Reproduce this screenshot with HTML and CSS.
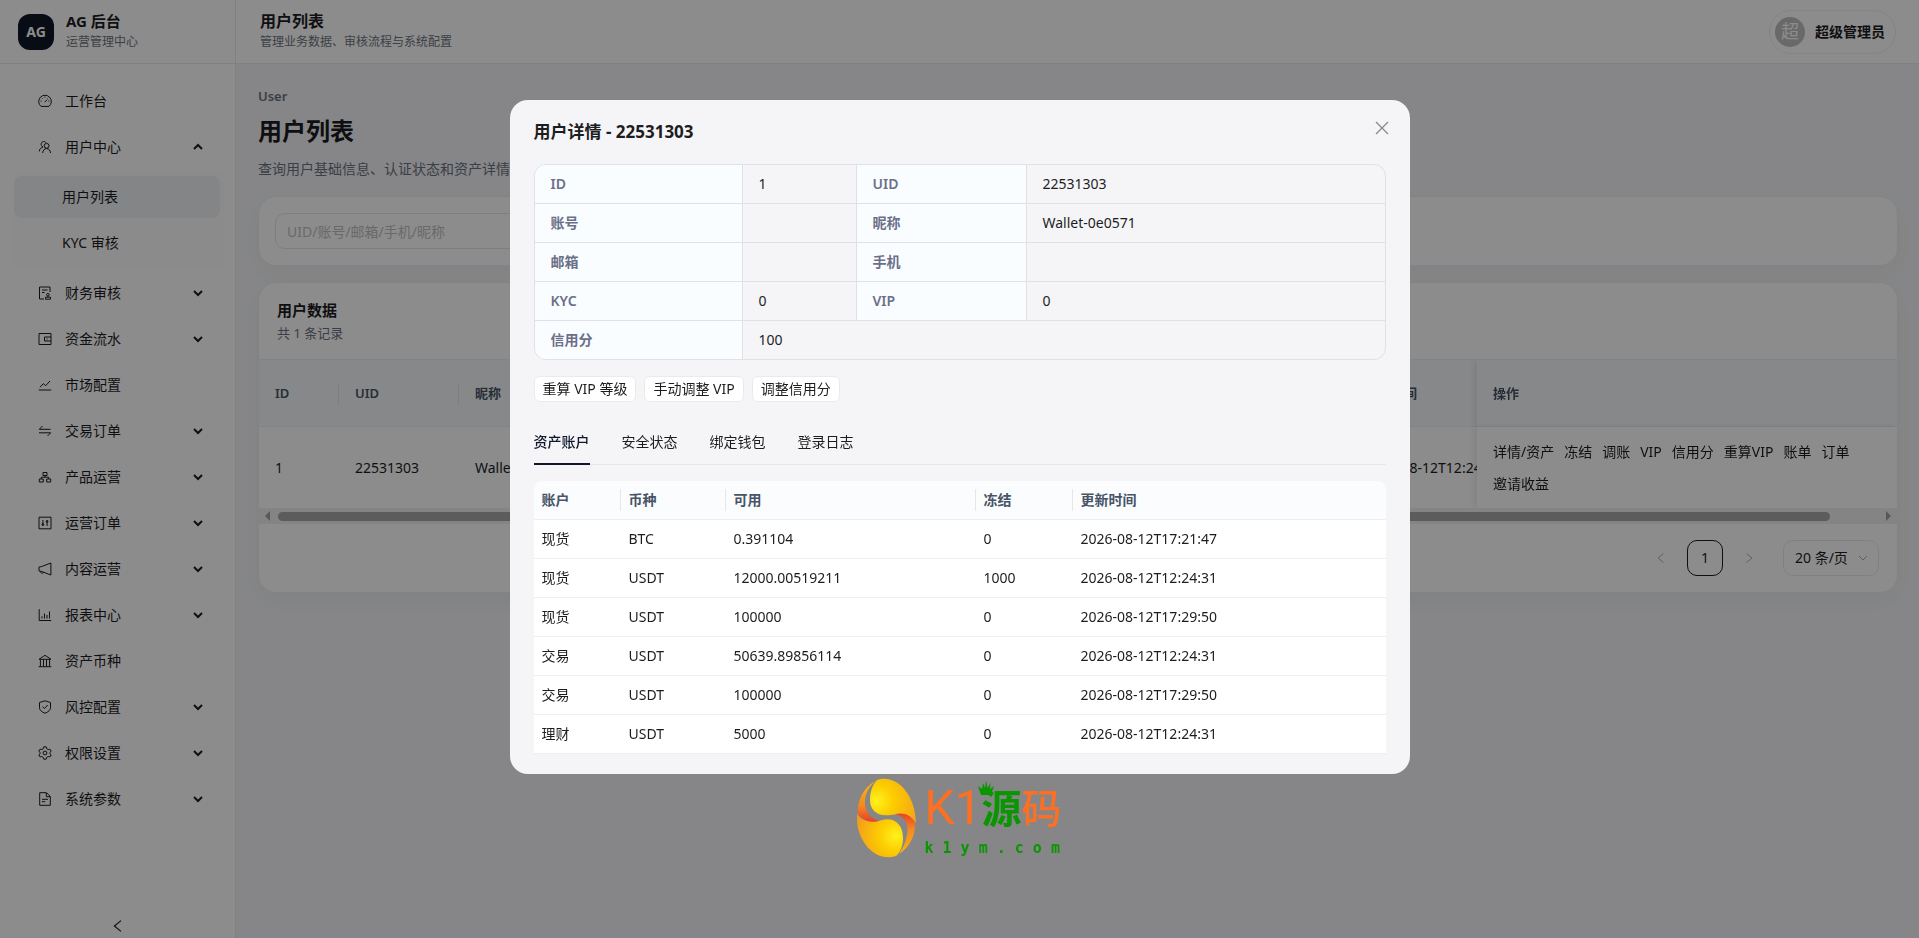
FILE: index.html
```html
<!DOCTYPE html>
<html lang="zh-CN">
<head>
    <meta charset="UTF-8">
    <meta name="viewport" content="width=device-width, initial-scale=1.0">
    <title>用户列表</title>
    <link rel="stylesheet" href="styles.css">
</head>
<body>

<svg class="sprite" aria-hidden="true">
    <symbol id="down" viewBox="0 0 10 10"><path d="M1 3l4 4 4-4"/></symbol>
    <symbol id="up" viewBox="0 0 10 10"><path d="M1 7l4-4 4 4"/></symbol>
    <symbol id="left" viewBox="0 0 10 10"><path d="M7.5 .5L2 5l5.500 4.500"/></symbol>
    <symbol id="right" viewBox="0 0 10 10"><path d="M2.500 .5L8 5l-5.500 4.500"/></symbol>
</svg>

<div class="layout">
    <aside class="sidebar">
        <div class="brand">
            <div class="brand-logo">AG</div>
            <div class="brand-text">
                <div class="brand-name">AG 后台</div>
                <div class="brand-sub">运营管理中心</div>
            </div>
        </div>
        <nav class="menu">
            <a class="menu-item" href="#">
                <svg class="icon" viewBox="0 0 14 14"><path d="M3 12.400a6.300 6.300 0 1 1 8 0z"/><path d="M6.600 8.200l2.600-2.600M7 2.600v1M2.600 7h1M10.400 7h1M3.900 3.900l.7.7M10.100 3.900l-.5.5"/></svg>
                <span>工作台</span>
            </a>
            <button class="menu-item" type="button">
                <svg class="icon" viewBox="0 0 14 14"><circle cx="8.600" cy="5.800" r="2.400"/><path d="M4.700 13c.2-2.800 1.700-4.400 3.900-4.400s3.700 1.600 3.900 4.400M5 6.900C3.400 6.300 2.900 5 3.200 3.600 3.700 1.300 7 .8 8 2.700M1.300 11.400C1.400 9.200 2.500 7.700 5 7.200"/></svg>
                <span>用户中心</span>
                <svg class="arrow"><use href="#up"/></svg>
            </button>
            <div class="submenu">
                <a class="submenu-item active" href="#">用户列表</a>
                <a class="submenu-item" href="#">KYC 审核</a>
            </div>
            <button class="menu-item" type="button">
                <svg class="icon" viewBox="0 0 14 14"><path d="M12 6V1H1.500v12H6M4 4h5.500M4 6.500h2.500"/><circle cx="9.900" cy="8.700" r="1.300"/><path d="M7.500 13.200v-2h5v2zM9.900 10v1"/></svg>
                <span>财务审核</span>
                <svg class="arrow"><use href="#down"/></svg>
            </button>
            <button class="menu-item" type="button">
                <svg class="icon" viewBox="0 0 14 14"><path d="M1 1.500h12v11H1zM13 5H6.500v4H13M8.500 7h1"/></svg>
                <span>资金流水</span>
                <svg class="arrow"><use href="#down"/></svg>
            </button>
            <a class="menu-item" href="#">
                <svg class="icon" viewBox="0 0 14 14"><path d="M.8 12h12.400M2 9.200L5.300 5.700l2.400 2L12 3"/></svg>
                <span>市场配置</span>
            </a>
            <button class="menu-item" type="button">
                <svg class="icon" viewBox="0 0 14 14"><path d="M12.500 5.300H1.300L4.500 2M1 8.800h11.700L9.500 12"/></svg>
                <span>交易订单</span>
                <svg class="arrow"><use href="#down"/></svg>
            </button>
            <button class="menu-item" type="button">
                <svg class="icon" viewBox="0 0 14 14"><path d="M5 2.500h4v3H5zM1.300 9h4v3h-4zM8.700 9h4v3h-4zM7 5.500v1.700M3.300 9V7.200h7.400V9"/></svg>
                <span>产品运营</span>
                <svg class="arrow"><use href="#down"/></svg>
            </button>
            <button class="menu-item" type="button">
                <svg class="icon" viewBox="0 0 14 14"><path d="M1 1.200h12v11.600H1zM4.900 4v6M9.100 4v6"/><circle cx="4.900" cy="8.500" r=".9"/><circle cx="9.100" cy="5.500" r=".9"/></svg>
                <span>运营订单</span>
                <svg class="arrow"><use href="#down"/></svg>
            </button>
            <button class="menu-item" type="button">
                <svg class="icon" viewBox="0 0 14 14"><path d="M1 5l2.500-.4L12.900 1v12L3.500 9.400 1 9zM2.300 9.300c0 2.200 3 2.500 3.200.9"/></svg>
                <span>内容运营</span>
                <svg class="arrow"><use href="#down"/></svg>
            </button>
            <button class="menu-item" type="button">
                <svg class="icon" viewBox="0 0 14 14"><path d="M1.200 1.200v11.300h12M4 10.500V8.300M6.500 10.500V5.500M9 10.500V7M11.500 10.500V3.500"/></svg>
                <span>报表中心</span>
                <svg class="arrow"><use href="#down"/></svg>
            </button>
            <a class="menu-item" href="#">
                <svg class="icon" viewBox="0 0 14 14"><path d="M1 5.300L7 1.300l6 4zM.7 12.700h12.600M2.400 5.500v7M5.500 5.500v7M8.500 5.500v7M11.600 5.500v7"/></svg>
                <span>资产币种</span>
            </a>
            <button class="menu-item" type="button">
                <svg class="icon" viewBox="0 0 14 14"><path d="M7 .8l5.500 1.700v5.300c0 2.300-2.200 4-5.500 5.500C3.700 11.800 1.500 10.100 1.500 7.800V2.500zM4.600 6.600l1.800 1.900L9.700 5"/></svg>
                <span>风控配置</span>
                <svg class="arrow"><use href="#down"/></svg>
            </button>
            <button class="menu-item" type="button">
                <svg class="icon" viewBox="0 0 14 14"><path d="M5.800 .8h2.400l.5 1.900 1.500.9 1.700-.5 1.300 2.100-1.300 1.200v1.300l1.300 1.200-1.300 2.100-1.700-.5-1.500.9-.5 1.800H5.800l-.5-1.800-1.500-.9-1.700.5L.8 8.900l1.300-1.200V6.400L.8 5.200l1.300-2.100 1.700.5 1.500-.9z"/><circle cx="7" cy="7" r="1.900"/></svg>
                <span>权限设置</span>
                <svg class="arrow"><use href="#down"/></svg>
            </button>
            <button class="menu-item" type="button">
                <svg class="icon" viewBox="0 0 14 14"><path d="M1.700 .7h6.800L12.300 4.500v8.800H1.700zM8.300 .9v3.800h4M4 7.300h6M4 9.700h3.300"/></svg>
                <span>系统参数</span>
                <svg class="arrow"><use href="#down"/></svg>
            </button>
        </nav>
        <button class="collapse" type="button" aria-label="收起"><svg><use href="#left"/></svg></button>
    </aside>

    <div class="main">
        <header class="topbar">
            <div class="topbar-text">
                <div class="topbar-title">用户列表</div>
                <div class="topbar-sub">管理业务数据、审核流程与系统配置</div>
            </div>
            <button class="user" type="button"><span class="avatar">超</span>超级管理员</button>
        </header>

        <main class="content">
            <div class="eyebrow">User</div>
            <h1>用户列表</h1>
            <p class="desc">查询用户基础信息、认证状态和资产详情</p>

            <div class="card filter">
                <input type="text" aria-label="关键词" placeholder="UID/账号/邮箱/手机/昵称">
            </div>

            <div class="card">
                <div class="card-head">
                    <h2>用户数据</h2>
                    <p>共 1 条记录</p>
                </div>
                <div class="table-wrap">
                    <table class="user-table">
                        <thead>
                            <tr>
                                <th class="col-id">ID</th>
                                <th class="col-uid">UID</th>
                                <th>昵称</th>
                                <th class="col-time">注册时间</th>
                                <th class="col-action">操作</th>
                            </tr>
                        </thead>
                        <tbody>
                            <tr>
                                <td>1</td>
                                <td>22531303</td>
                                <td>Wallet-0e0571</td>
                                <td>2026-08-12T12:24:31</td>
                                <td class="col-action">
                                    <div class="actions">
                                        <a href="#">详情/资产</a>
                                        <a href="#">冻结</a>
                                        <a href="#">调账</a>
                                        <a href="#">VIP</a>
                                        <a href="#">信用分</a>
                                        <a href="#">重算VIP</a>
                                        <a href="#">账单</a>
                                        <a href="#">订单</a>
                                        <a href="#">邀请收益</a>
                                    </div>
                                </td>
                            </tr>
                        </tbody>
                    </table>
                </div>
                <div class="scrollbar">
                    <span class="scroll-left"></span>
                    <span class="scroll-track"><span class="scroll-thumb"></span></span>
                    <span class="scroll-right"></span>
                </div>
                <div class="pagination">
                    <button class="page-arrow" type="button" aria-label="上一页"><svg><use href="#left"/></svg></button>
                    <button class="page-num" type="button">1</button>
                    <button class="page-arrow" type="button" aria-label="下一页"><svg><use href="#right"/></svg></button>
                    <div class="page-size">
                        <select aria-label="每页条数"><option>20 条/页</option></select>
                        <svg><use href="#down"/></svg>
                    </div>
                </div>
            </div>
        </main>
    </div>
</div>

<div class="mask">
    <div class="modal" role="dialog" aria-labelledby="modalTitle">
        <div class="modal-head">
            <h3 id="modalTitle">用户详情 - 22531303</h3>
            <button class="close" type="button" aria-label="关闭"><svg viewBox="0 0 14 14"><path d="M1 1l12 12M13 1L1 13"/></svg></button>
        </div>

        <table class="detail">
            <colgroup><col class="d1"><col class="d2"><col class="d3"><col></colgroup>
            <tbody>
                <tr><th>ID</th><td>1</td><th>UID</th><td>22531303</td></tr>
                <tr><th>账号</th><td></td><th>昵称</th><td>Wallet-0e0571</td></tr>
                <tr><th>邮箱</th><td></td><th>手机</th><td></td></tr>
                <tr><th>KYC</th><td>0</td><th>VIP</th><td>0</td></tr>
                <tr><th>信用分</th><td colspan="3">100</td></tr>
            </tbody>
        </table>

        <div class="buttons">
            <button type="button">重算 VIP 等级</button>
            <button type="button">手动调整 VIP</button>
            <button type="button">调整信用分</button>
        </div>

        <div class="tabs" role="tablist">
            <button class="tab active" type="button" role="tab" aria-selected="true">资产账户</button>
            <button class="tab" type="button" role="tab">安全状态</button>
            <button class="tab" type="button" role="tab">绑定钱包</button>
            <button class="tab" type="button" role="tab">登录日志</button>
        </div>

        <table class="asset">
            <colgroup><col class="a1"><col class="a2"><col class="a3"><col class="a4"><col></colgroup>
            <thead>
                <tr><th>账户</th><th>币种</th><th>可用</th><th>冻结</th><th>更新时间</th></tr>
            </thead>
            <tbody>
                <tr><td>现货</td><td>BTC</td><td>0.391104</td><td>0</td><td>2026-08-12T17:21:47</td></tr>
                <tr><td>现货</td><td>USDT</td><td>12000.00519211</td><td>1000</td><td>2026-08-12T12:24:31</td></tr>
                <tr><td>现货</td><td>USDT</td><td>100000</td><td>0</td><td>2026-08-12T17:29:50</td></tr>
                <tr><td>交易</td><td>USDT</td><td>50639.89856114</td><td>0</td><td>2026-08-12T12:24:31</td></tr>
                <tr><td>交易</td><td>USDT</td><td>100000</td><td>0</td><td>2026-08-12T17:29:50</td></tr>
                <tr><td>理财</td><td>USDT</td><td>5000</td><td>0</td><td>2026-08-12T12:24:31</td></tr>
            </tbody>
        </table>
    </div>

    <div class="watermark">
        <svg class="wm-logo" viewBox="0 0 59 80">
            <defs>
                <radialGradient id="g1" cx=".15" cy=".5" r=".9"><stop offset="0" stop-color="#fff21c"/><stop offset=".4" stop-color="#fccd00"/><stop offset="1" stop-color="#f6a615"/></radialGradient>
                <radialGradient id="g2" cx=".85" cy=".5" r=".9"><stop offset="0" stop-color="#fff21c"/><stop offset=".4" stop-color="#fccd00"/><stop offset="1" stop-color="#f39c1c"/></radialGradient>
                <linearGradient id="g3" x1="0" y1="0" x2="0" y2="1"><stop offset="0" stop-color="#f9b413"/><stop offset=".6" stop-color="#f58a1f"/><stop offset="1" stop-color="#e8402a"/></linearGradient>
                <linearGradient id="g4" x1="0" y1="0" x2="0" y2="1"><stop offset="0" stop-color="#e8402a"/><stop offset=".4" stop-color="#f58a1f"/><stop offset="1" stop-color="#f9b413"/></linearGradient>
            </defs>
            <path fill="url(#g1)" d="M20 2C38-4 58 14 59 45C54 37 45 35 34 37C20 39 13 32 13 22C13 13 16 6 20 2z"/>
            <path fill="url(#g2)" d="M0 36C6 44 14 45 25 42C38 39 46 47 46 60C46 68 43 75 39 78C18 85-2 62 0 36z"/>
            <path fill="url(#g3)" d="M18 3C6 10 0 23 1 36C6 43 14 45 22 43C12 40 7 31 8 22C9 14 13 8 18 3z"/>
            <path fill="url(#g4)" d="M38 36C47 34 54 37 58 44C59 57 53 69 42 76C49 66 53 52 49 44C46 39 42 37 38 36z"/>
        </svg>
        <div class="wm-text">
            <div class="wm-name"><span class="wm-k">K1</span><span class="wm-green">源<svg class="crown" viewBox="0 0 16 16"><path d="M0 6l4 3 1-6 2 5 1-8 1.500 8 3-5-.5 6 4-3-3 9H3z"/></svg></span><span class="wm-orange">码</span></div>
            <div class="wm-url">k 1 y m . c o m</div>
        </div>
    </div>
</div>

</body>
</html>
```
FILE: styles.css
```css
* {
    box-sizing: border-box;
}
body {
    margin: 0;
    font-family: "Noto Sans", "Noto Sans CJK SC", sans-serif;
    font-size: 14px;
    line-height: 22px;
    color: #1d1d1f;
    background: #f4f5f7;
}
h1, h2, h3, p {
    margin: 0;
}
a {
    color: inherit;
    text-decoration: none;
}
button, input, select {
    font: inherit;
    color: inherit;
}
button {
    border: none;
    background: none;
    padding: 0;
    cursor: pointer;
}
svg {
    fill: none;
    stroke: currentColor;
    flex: none;
}
.sprite {
    display: none;
}
.layout {
    display: flex;
    min-height: 100vh;
}

/* sidebar */
.sidebar {
    width: 236px;
    flex: none;
    display: flex;
    flex-direction: column;
    background: #fff;
    border-right: 1px solid #e8eaee;
}
.brand {
    display: flex;
    align-items: center;
    gap: 12px;
    height: 64px;
    padding: 0 18px;
    border-bottom: 1px solid #e8eaee;
}
.brand-logo {
    width: 36px;
    height: 36px;
    line-height: 36px;
    border-radius: 12px;
    background: #0f1626;
    color: #fff;
    font-weight: 700;
    text-align: center;
}
.brand-text, .topbar-text {
    padding-bottom: 2px;
}
.brand-name {
    font-size: 15px;
    line-height: 22px;
    font-weight: 700;
}
.brand-sub {
    font-size: 12px;
    line-height: 20px;
    color: #6e7480;
}
.menu {
    flex: 1;
    padding: 16px 14px;
    display: flex;
    flex-direction: column;
    gap: 4px;
}
.menu-item {
    display: flex;
    align-items: center;
    gap: 13px;
    height: 42px;
    padding: 0 18px 0 24px;
    text-align: left;
}
.menu-item span {
    flex: 1;
}
.icon {
    width: 14px;
    height: 14px;
}
.arrow {
    width: 10px;
    height: 10px;
    stroke-width: 2;
}
.submenu {
    display: flex;
    flex-direction: column;
    gap: 4px;
    margin-right: -3px;
    padding: 4px 4px 4px 0;
    background: #fdfdfd;
}
.submenu-item {
    height: 42px;
    line-height: 42px;
    padding-left: 48px;
    border-radius: 8px;
}
.submenu-item.active {
    background: #eff3f6;
}
.collapse {
    height: 48px;
    display: flex;
    align-items: center;
    justify-content: center;
    padding-top: 24px;
}
.collapse svg {
    width: 12px;
    height: 12px;
}

/* top bar */
.main {
    flex: 1;
    min-width: 0;
}
.topbar {
    display: flex;
    align-items: center;
    justify-content: space-between;
    height: 64px;
    padding: 0 23px 0 24px;
    background: #fff;
    border-bottom: 1px solid #e8eaee;
}
.topbar-title {
    font-size: 16px;
    line-height: 22px;
    font-weight: 600;
}
.topbar-sub {
    font-size: 12px;
    line-height: 20px;
    color: #6e7480;
}
.user {
    display: flex;
    align-items: center;
    gap: 10px;
    height: 44px;
    padding: 0 10px 0 5px;
    border: 1px solid #eff0f2;
    border-radius: 22px;
    font-weight: 600;
}
.avatar {
    width: 30px;
    height: 30px;
    line-height: 28px;
    border-radius: 50%;
    background: #bfbfbf;
    color: #fff;
    font-size: 18px;
    font-weight: 400;
}

/* content */
.content {
    padding: 22px 21px 22px 22px;
}
.eyebrow {
    font-size: 13px;
    line-height: 20px;
    font-weight: 600;
    color: #6b7280;
}
h1 {
    margin-top: 8px;
    font-size: 24px;
    line-height: 34px;
    font-weight: 700;
}
.desc {
    margin: 10px 0 16px;
    color: #6b7280;
}
.card {
    background: #fff;
    border: 1px solid #eceef1;
    border-radius: 18px;
    overflow: hidden;
    box-shadow: 0 8px 24px rgba(15, 23, 42, 0.04);
}
.filter {
    padding: 16px;
    margin-bottom: 16px;
}
.filter input {
    display: block;
    width: 300px;
    height: 36px;
    padding: 0 11px;
    border: 1px solid #e2e5ea;
    border-radius: 10px;
    background: #fff;
}
.filter input::placeholder {
    color: #bfbfbf;
}
.card-head {
    padding: 15px 18px;
    border-bottom: 1px solid #eceef1;
}
h2 {
    font-size: 15px;
    line-height: 24px;
    font-weight: 600;
}
.card-head p {
    font-size: 13px;
    line-height: 22px;
    color: #6b7280;
}
.table-wrap {
    overflow: hidden;
}
.user-table {
    width: calc(100% + 60px);
    table-layout: fixed;
    border-collapse: separate;
    border-spacing: 0;
}
.user-table th, .user-table td {
    padding: 0 16px;
    text-align: left;
    position: relative;
    background: #fff;
}
.user-table th {
    height: 67px;
    font-size: 13px;
    font-weight: 600;
    color: #475467;
    background: #f5f8fa;
    border-bottom: 1px solid #eceef1;
}
.user-table td {
    height: 81px;
}
.user-table .col-id {
    width: 80px;
}
.user-table .col-uid {
    width: 120px;
}
.user-table .col-time {
    width: 188px;
}
.user-table .col-id::after, .user-table .col-uid::after {
    content: "";
    position: absolute;
    right: 0;
    top: 23px;
    width: 1px;
    height: 22px;
    background: #e2e5ea;
}
.user-table .col-action {
    position: sticky;
    right: 0;
    width: 420px;
    box-shadow: -3px 0 6px rgba(0, 0, 0, 0.08);
}
.actions {
    display: flex;
    flex-wrap: wrap;
    gap: 10px;
}
.scrollbar {
    display: flex;
    align-items: center;
    gap: 8px;
    height: 16px;
    padding: 0 6px;
    background: #f0f0f0;
}
.scroll-track {
    flex: 1;
}
.scroll-thumb {
    display: block;
    width: 97%;
    height: 9px;
    border-radius: 5px;
    background: #a8a8a8;
}
.scroll-left, .scroll-right {
    border: 5px solid transparent;
}
.scroll-left {
    border-left-width: 0;
    border-right-color: #a0a0a0;
}
.scroll-right {
    border-right-width: 0;
    border-left-color: #a0a0a0;
}
.pagination {
    display: flex;
    justify-content: flex-end;
    gap: 8px;
    padding: 16px 18px;
}
.page-arrow, .page-num {
    width: 36px;
    height: 36px;
}
.page-arrow {
    color: #b0b0b0;
}
.page-arrow svg {
    width: 10px;
    height: 10px;
}
.page-num {
    border: 1px solid #1d1d1f;
    border-radius: 10px;
}
.page-size {
    position: relative;
    margin-left: 8px;
}
.page-size select {
    width: 96px;
    height: 36px;
    padding: 0 11px;
    appearance: none;
    border: 1px solid #e8eaee;
    border-radius: 10px;
    background: #fff;
}
.page-size svg {
    position: absolute;
    right: 11px;
    top: 13px;
    width: 10px;
    height: 10px;
    color: #b0b0b0;
}

/* modal */
.mask {
    position: fixed;
    inset: 0;
    padding-top: 100px;
    background: rgba(0, 0, 0, 0.45);
    display: flex;
    flex-direction: column;
    align-items: center;
}
.modal {
    width: 900px;
    max-width: 96%;
    padding: 20px 24px;
    border-radius: 18px;
    background: #f5f5f7;
}
.modal-head {
    display: flex;
    justify-content: space-between;
    margin-bottom: 20px;
}
h3 {
    font-size: 17px;
    line-height: 24px;
    font-weight: 700;
}
.close {
    display: flex;
    align-items: center;
    width: 14px;
    height: 16px;
    margin-right: -3px;
    color: #8a8a8c;
}
.close svg {
    width: 14px;
    height: 14px;
    stroke-width: 1.3;
}
.detail, .asset {
    width: 100%;
    table-layout: fixed;
    border-collapse: separate;
    border-spacing: 0;
    text-align: left;
}
.detail {
    border: 1px solid #dfe1e4;
    border-radius: 12px;
    overflow: hidden;
}
.detail th, .detail td {
    height: 39px;
    padding: 8px 16px;
    border-right: 1px solid #dfe1e4;
    border-bottom: 1px solid #dfe1e4;
}
.detail th {
    background: #fafdff;
    color: #6b7088;
    font-weight: 600;
}
.detail tr :last-child {
    border-right: none;
}
.detail tr:last-child > * {
    height: 38px;
    border-bottom: none;
}
.d1 {
    width: 208px;
}
.d2 {
    width: 114px;
}
.d3 {
    width: 170px;
}
.buttons {
    display: flex;
    gap: 8px;
    margin: 16px 0;
}
.buttons button {
    height: 26px;
    padding: 0 8px;
    border: 1px solid #e8eaee;
    border-radius: 6px;
    background: #fff;
}
.tabs {
    display: flex;
    gap: 32px;
    height: 47px;
    margin-bottom: 16px;
    border-bottom: 1px solid #e6e7ea;
}
.tab {
    height: 47px;
    padding-top: 2px;
    border-bottom: 2px solid transparent;
}
.tab.active {
    color: #0f172a;
    font-weight: 500;
    border-bottom-color: #0f172a;
}
.asset th, .asset td {
    padding: 8px;
    border-bottom: 1px solid #eeeff1;
    background: #fff;
}
.asset th {
    position: relative;
    background: #fafcfe;
    color: #475467;
    font-weight: 600;
}
.asset th:first-child {
    border-top-left-radius: 8px;
}
.asset th:last-child {
    border-top-right-radius: 8px;
}
.asset th:not(:last-child)::after {
    content: "";
    position: absolute;
    right: 0;
    top: 8px;
    width: 1px;
    height: 22px;
    background: #e6e7ea;
}
.a1 {
    width: 87px;
}
.a2 {
    width: 105px;
}
.a3 {
    width: 250px;
}
.a4 {
    width: 97px;
}

/* watermark */
.watermark {
    display: flex;
    gap: 8px;
    margin-top: 4px;
}
.wm-logo {
    width: 59px;
    height: 80px;
    stroke: none;
}
.wm-name {
    display: flex;
    align-items: center;
    height: 60px;
    font-size: 40px;
    font-weight: 500;
    line-height: 60px;
    color: #ff6f21;
}
.wm-k {
    font-family: Roboto, sans-serif;
    font-size: 48px;
    font-weight: 400;
}
.wm-green {
    position: relative;
    color: #0a9600;
    font-weight: 700;
}
.crown {
    position: absolute;
    left: -4px;
    top: 2px;
    width: 16px;
    height: 16px;
    fill: #0a9600;
    stroke: none;
}
.wm-url {
    font-family: "DejaVu Sans Mono", monospace;
    font-size: 15px;
    font-weight: 700;
    line-height: 20px;
    color: #0a9600;
}
```
